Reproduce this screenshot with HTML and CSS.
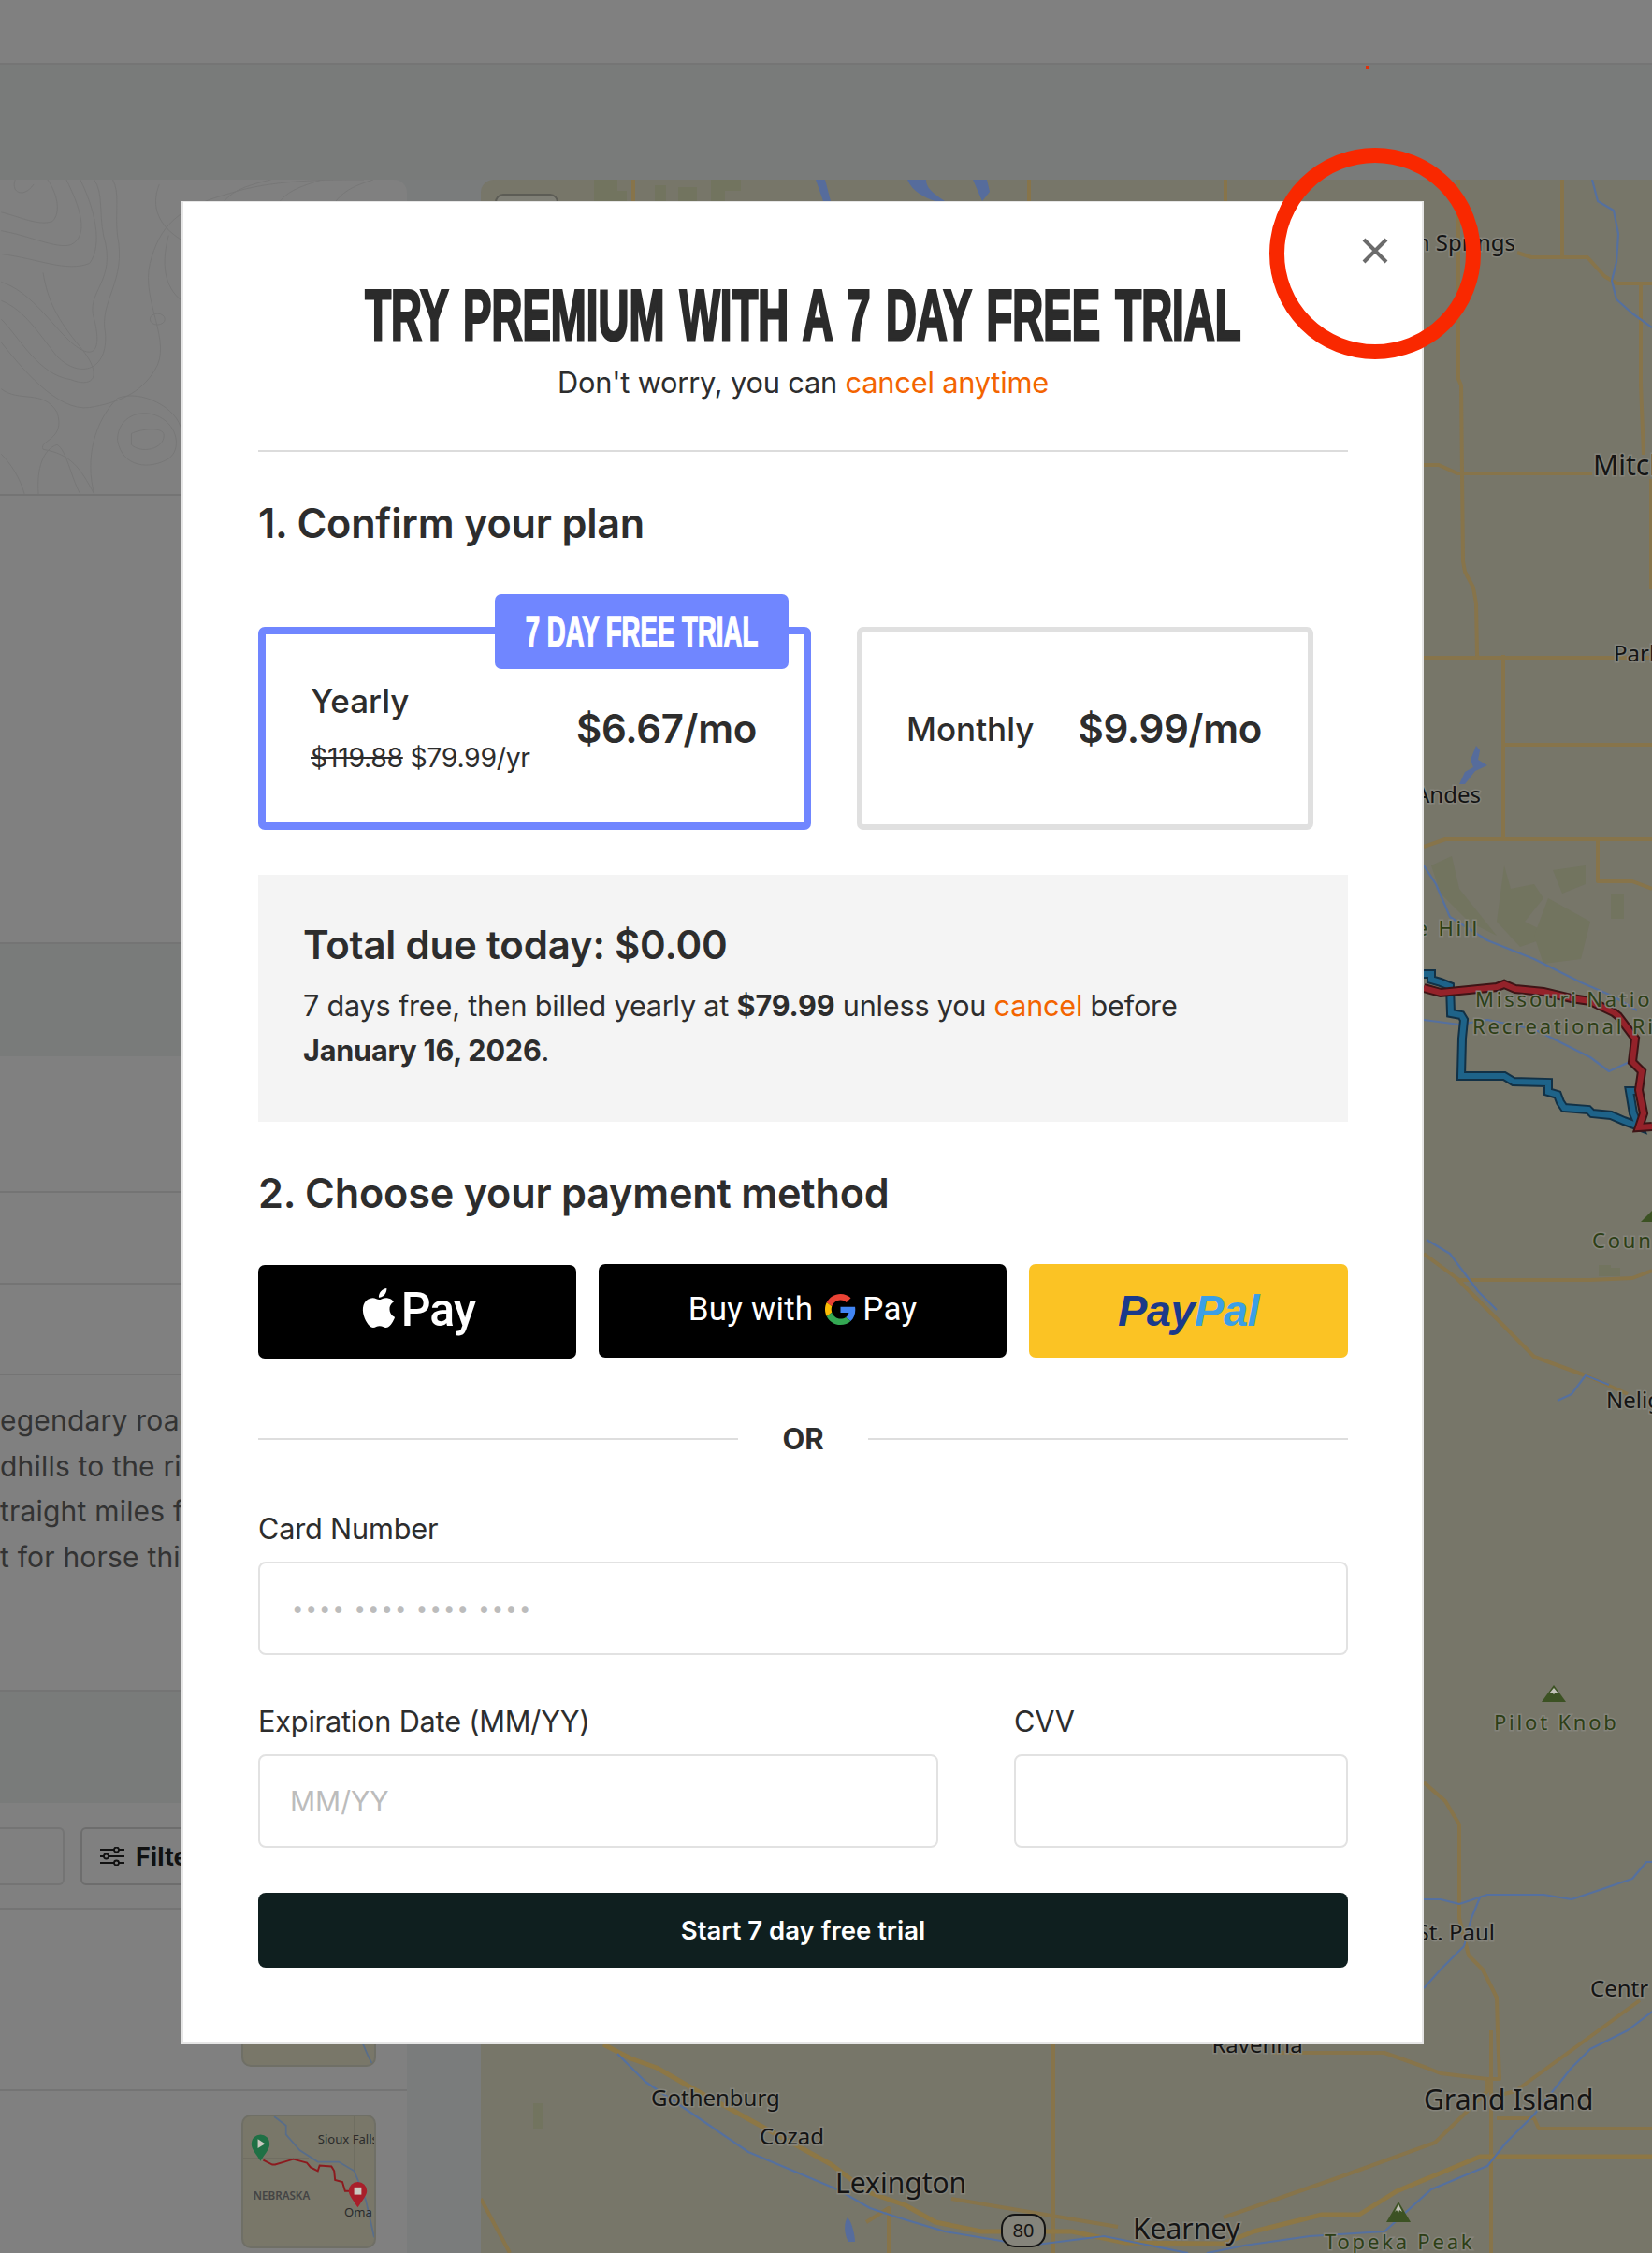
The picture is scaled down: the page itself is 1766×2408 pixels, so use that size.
FILE: index.html
```html
<!DOCTYPE html>
<html lang="en">
<head>
<meta charset="utf-8">
<title>Try Premium</title>
<link rel="stylesheet" href="styles.css">
</head>
<body>
<div class="page">
  <header class="topbar"><span class="topdot"></span></header>
  <div class="band"></div>
  <div class="main">
    <aside class="sidebar">
      <div class="topo">
        <svg class="fill" viewBox="0 0 435 338">
          <g class="contour">
            <path d="M0 55C30 60 60 75 75 70C95 60 85 30 70 0"/>
            <path d="M0 80C40 85 70 100 95 90C110 70 100 30 85 0"/>
            <path d="M15 0C10 15 25 20 35 5"/>
            <path d="M0 35C20 40 40 50 55 45C65 35 60 15 50 0"/>
            <path d="M0 110C30 120 50 150 70 170C95 195 110 190 100 150C90 120 125 110 110 60C105 35 110 15 100 0"/>
            <path d="M0 130C25 140 40 165 60 190C85 215 115 205 112 165C105 130 135 110 125 60C122 35 128 15 120 0"/>
            <path d="M0 150C20 170 40 210 75 215C100 225 110 210 85 180C60 150 50 130 45 100"/>
            <path d="M0 175C20 200 60 250 95 245C125 240 150 230 165 205C185 175 150 130 160 90C170 50 190 30 245 15C290 0 350 0 390 0"/>
            <path d="M0 225C20 240 45 225 60 250C70 280 40 280 45 290C75 295 85 310 100 338"/>
            <path d="M100 338C90 300 100 260 125 235C150 225 190 245 194 270"/>
            <path d="M140 273C150 268 175 265 175 275C175 290 150 295 140 285Z"/>
            <path d="M125 280C125 255 150 245 170 255C190 265 194 290 180 300C160 312 130 310 125 280Z"/>
            <path d="M160 150a8 6 0 1 0 16 0a8 6 0 1 0-16 0"/>
            <path d="M40 338C38 310 45 290 60 285C70 290 75 320 85 338"/>
            <path d="M194 65C170 50 160 30 170 5"/>
            <path d="M194 130C175 115 172 90 180 60"/>
            <path d="M0 295C10 305 20 320 25 338"/>
            <path d="M240 23C250 10 270 5 290 0M300 23C310 10 330 5 345 0M360 23C370 10 385 5 400 0"/>
          </g>
        </svg>
      </div>
      <div class="sec-a"></div>
      <div class="sec-band"></div>
      <div class="sec-b"></div>
      <div class="sec-c"></div>
      <div class="sec-d"></div>
      <div class="sec-text">
        <p class="blurb">egendary road trip across</p>
        <p class="blurb">dhills to the rivers beyond</p>
        <p class="blurb">traight miles from the west</p>
        <p class="blurb">t for horse thieves and more</p>
      </div>
      <div class="sec-band2"></div>
      <div class="filter-row">
        <div class="search-box"></div>
        <div class="filter-btn">
          <svg class="slider-icon" viewBox="0 0 26 20">
            <g class="slider-lines">
              <path d="M0 3h15M20 3h6M0 10h4M9 10h17M0 17h15M20 17h6"/>
              <circle cx="17.5" cy="3" r="2.5"/><circle cx="6.500" cy="10" r="2.5"/><circle cx="17.500" cy="17" r="2.500"/>
            </g>
          </svg>
          <span>Filters</span>
        </div>
      </div>
      <div class="sec-thumb1">
        <div class="thumb thumb-a">
          <svg class="fill" viewBox="0 0 144 89"><path class="thumb-river" d="M132 64C136 72 138 80 144 89"/></svg>
        </div>
      </div>
      <div class="sec-thumb2">
        <div class="thumb thumb-b">
          <svg class="fill" viewBox="0 0 144 143">
            <path class="thumb-road" d="M0 46H72M122 0V60"/>
            <path class="thumb-river" d="M34 0L47 10L47 20L62 37L82 50L105 50L122 60L129 77L135 93L144 133"/>
            <path class="thumb-route" d="M22 48L32 53L35 53L45 50L55 47L70 51L74 56L82 60L84 54L97 55L100 60L101 70L109 72L112 82L122 82"/>
            <path class="pin-green" d="M19 49C14 41 9 36 9 30A10 10 0 0 1 29 30C29 36 24 41 19 49Z"/>
            <path class="pin-mark" d="M16 25L24 30L16 35Z"/>
            <path class="pin-red" d="M126 100C120 91 116 86 116 82A10 10 0 0 1 136 82C136 86 132 91 126 100Z"/>
            <rect class="pin-mark" x="122" y="78" width="8" height="8"/>
            <text class="thumb-city" x="82" y="30">Sioux Falls</text>
            <text class="thumb-state" x="11" y="92">NEBRASKA</text>
            <text class="thumb-city" x="111" y="110">Oma</text>
          </svg>
        </div>
      </div>
    </aside>
    <div class="strip"></div>
    <div class="map">
      <svg class="map-svg" viewBox="514 192 1252 2216">
        <g class="park">
          <path d="M635 192H660V204H670V215H635ZM700 198H712V215H700ZM725 200H745V215H725ZM760 192H792V204H775V215H760Z"/>
          <path d="M1530 925L1552 915L1560 950L1580 975L1600 1000L1570 985L1540 955Z"/>
          <path d="M1608 925L1615 950L1640 945L1650 960L1630 985L1660 1000L1625 1012L1600 985Z"/>
          <path d="M1660 930L1695 925L1695 945L1670 955ZM1655 960L1700 985L1690 1025L1650 1030L1640 1000Z"/>
          <path d="M1709 1352H1722V1355H1732V1364H1709Z"/>
          <path d="M570 2248H580V2276H570Z"/>
          <path d="M1722 955H1736V982H1722Z"/>
        </g>
        <g class="water">
          <path d="M872 192L880 215H888L882 192Z"/>
          <path d="M970 192C975 205 990 212 1000 215H1010C995 205 990 200 990 192ZM1040 192L1050 215L1058 205L1055 192Z"/>
          <path d="M1560 838L1566 825L1575 820L1572 812L1578 797L1582 802L1580 812L1590 818L1577 824L1566 838Z"/>
          <path d="M906 2370C911 2375 914 2390 914 2396L907 2396C902 2388 902 2375 906 2370Z"/>
        </g>
        <g class="road">
          <path d="M1100 192V215M1310 192V215M677 192V215"/>
          <path d="M1559 192V405L1562 412L1563 506L1564 600L1566 611L1575 628L1578 645L1579 700L1580 704"/>
          <path d="M1670 192V275M1622 270L1637 275H1697L1715 295L1728 303H1766M1754 303V410L1757 486M1522 497H1538L1558 506H1702M1765 512V630"/>
          <path d="M1522 703H1766M1607 700V898M1607 796H1766M1522 905L1545 897H1766M1708 897V942H1745L1766 950"/>
          <path d="M1522 1340L1560 1368H1700L1745 1366L1766 1358M1557 1366L1640 1450L1700 1472L1740 1490"/>
          <path d="M1522 1905L1545 1925L1560 1950V2050L1570 2090L1585 2105L1600 2135L1601 2170L1603 2222H1590V2235L1565 2260L1534 2290L1429 2328L1308 2370M1195 2380L1017 2350"/>
          <path d="M1360 2194H1480L1525 2210L1540 2216L1590 2222M1600 2240L1620 2235L1753 2138"/>
          <path d="M1600 2264H1640L1645 2275H1766"/>
          <path d="M1126 2185V2408M1594 2170V2408"/>
          <path d="M514 2350L545 2408M926 2375L950 2360L950 2408"/>
          <path class="road-main" d="M645 2185L674 2200L702 2210L742 2233L815 2273L888 2313L928 2343L968 2357L1000 2375L1049 2385H1146L1203 2397L1308 2398L1340 2385L1413 2367H1453L1493 2342L1582 2305H1610H1766"/>
        </g>
        <g class="river">
          <path d="M1702 192L1708 215L1725 225L1730 250L1728 280L1723 300L1728 320L1745 335L1766 350"/>
          <path d="M1522 925L1535 945L1550 980L1590 1005L1640 1025L1690 1050L1725 1065L1750 1080"/>
          <path d="M1522 1090L1560 1095L1590 1090L1640 1100L1700 1130L1720 1145L1742 1135"/>
          <path d="M1525 1325L1550 1340L1580 1380L1600 1400M1665 1497L1680 1490L1695 1470L1720 1480"/>
          <path d="M1522 2030L1540 2030L1560 2035L1590 2025L1650 2025L1680 2030L1710 2020L1745 2008L1760 1990H1766M1582 2028L1573 2050L1565 2080L1540 2105L1522 2125"/>
          <path d="M1766 2150L1740 2170L1700 2190L1680 2210L1640 2260L1610 2290L1590 2315L1530 2340L1480 2385L1400 2390L1330 2400L1290 2408"/>
          <path d="M660 2195L690 2225L800 2300L895 2340L930 2360L960 2370L1010 2385L1100 2400L1180 2390L1270 2408"/>
        </g>
        <g class="route-blue-edge">
          <path d="M1522 1041H1530V1047L1540 1050L1550 1054L1551 1083L1562 1085L1565 1090L1563 1110L1562 1150H1608L1618 1156L1655 1157V1167L1665 1170L1668 1178L1672 1184L1698 1186L1702 1190L1722 1192L1736 1198L1752 1204L1746 1190L1742 1166H1748"/>
        </g>
        <g class="route-blue">
          <path d="M1522 1041H1530V1047L1540 1050L1550 1054L1551 1083L1562 1085L1565 1090L1563 1110L1562 1150H1608L1618 1156L1655 1157V1167L1665 1170L1668 1178L1672 1184L1698 1186L1702 1190L1722 1192L1736 1198L1752 1204L1746 1190L1742 1166H1748"/>
        </g>
        <g class="route-red-edge">
          <path d="M1522 1056L1540 1061L1600 1055L1608 1052L1620 1057L1650 1060L1680 1067L1700 1070L1725 1082L1730 1086L1748 1110L1745 1135L1755 1145L1752 1165L1757 1190L1752 1205L1766 1204"/>
        </g>
        <g class="route-red">
          <path d="M1522 1056L1540 1061L1600 1055L1608 1052L1620 1057L1650 1060L1680 1067L1700 1070L1725 1082L1730 1086L1748 1110L1745 1135L1755 1145L1752 1165L1757 1190L1752 1205L1766 1204"/>
        </g>
        <path class="peak" d="M1767 1293L1780 1306H1754Z"/>
        <path class="peak" d="M1661 1801L1674 1819H1648Z"/>
        <path class="snow" d="M1661 1804L1666 1810L1663 1809L1661 1811L1659 1809L1656 1810Z"/>
        <path class="peak" d="M1495 2353L1508 2375H1482Z"/>
        <path class="snow" d="M1495 2356L1499 2364L1496 2362L1495 2365L1493 2362L1491 2364Z"/>
        <text class="lbl lbl-m" x="1620" y="268" text-anchor="end">n Springs</text>
        <text class="lbl lbl-xl" x="1703" y="508">Mitch</text>
        <text class="lbl lbl-m" x="1725" y="707">Park</text>
        <text class="lbl lbl-m" x="1583" y="858" text-anchor="end">Andes</text>
        <text class="lbl lbl-g" x="1582" y="1000" text-anchor="end">e Hill</text>
        <text class="lbl lbl-g" x="1577" y="1076">Missouri Nation</text>
        <text class="lbl lbl-g" x="1574" y="1105">Recreational Ri</text>
        <text class="lbl lbl-g" x="1702" y="1334">Coun</text>
        <text class="lbl lbl-m" x="1717" y="1505">Nelig</text>
        <text class="lbl lbl-g" x="1597" y="1849">Pilot Knob</text>
        <text class="lbl lbl-m" x="1598" y="2074" text-anchor="end">St. Paul</text>
        <text class="lbl lbl-m" x="1700" y="2134">Centr</text>
        <text class="lbl lbl-m" x="1344" y="2194" text-anchor="middle">Ravenna</text>
        <text class="lbl lbl-xl" x="1522" y="2255">Grand Island</text>
        <text class="lbl lbl-m" x="696" y="2251">Gothenburg</text>
        <text class="lbl lbl-m" x="812" y="2292">Cozad</text>
        <text class="lbl lbl-l" x="893" y="2344">Lexington</text>
        <text class="lbl lbl-l" x="1211" y="2393">Kearney</text>
        <text class="lbl lbl-g" x="1416" y="2404">Topeka Peak</text>
        <rect class="shield" x="1071" y="2367" width="46" height="34" rx="14"/>
        <text class="shield-num" x="1094" y="2391" text-anchor="middle">80</text>
        <rect class="map-ctrl" x="530" y="208" width="66" height="30" rx="8"/>
      </svg>
    </div>
  </div>

  <section class="modal">
    <button class="close" aria-label="Close">
      <svg class="close-icon" viewBox="0 0 28 28"><path d="M2 2L26 26M26 2L2 26"/></svg>
    </button>
    <div class="intro">
      <h1 class="title"><span class="title-in">TRY PREMIUM WITH A 7 DAY FREE TRIAL</span></h1>
      <p class="sub">Don't worry, you can <span class="orange">cancel anytime</span></p>
    </div>
    <hr class="rule">
    <h2 class="step step-1">1. Confirm your plan</h2>
    <div class="plans">
      <div class="plan plan-on">
        <div class="badge"><span class="badge-in">7 DAY FREE TRIAL</span></div>
        <div class="plan-left">
          <div class="plan-name">Yearly</div>
          <div class="plan-was"><s>$119.88</s> $79.99/yr</div>
        </div>
        <div class="plan-price">$6.67/mo</div>
      </div>
      <div class="plan plan-off">
        <div class="plan-name">Monthly</div>
        <div class="plan-price">$9.99/mo</div>
      </div>
    </div>
    <div class="total">
      <h3 class="total-h">Total due today: $0.00</h3>
      <p class="total-p">7 days free, then billed yearly at <b>$79.99</b> unless you <span class="orange">cancel</span> before<br><b>January 16, 2026</b>.</p>
    </div>
    <h2 class="step step-2">2. Choose your payment method</h2>
    <div class="pays">
      <div class="pay pay-apple">
        <svg class="apple" viewBox="0 0 24 24"><path d="M12.152 6.896c-.948 0-2.415-1.078-3.96-1.04-2.04.027-3.91 1.183-4.961 3.014-2.117 3.675-.546 9.103 1.519 12.09 1.013 1.454 2.208 3.09 3.792 3.039 1.52-.065 2.09-.987 3.935-.987 1.831 0 2.35.987 3.96.948 1.637-.026 2.676-1.48 3.676-2.948 1.156-1.688 1.636-3.325 1.662-3.415-.039-.013-3.182-1.221-3.22-4.857-.026-3.04 2.48-4.494 2.597-4.559-1.429-2.09-3.623-2.324-4.39-2.376-2-.156-3.675 1.09-4.61 1.09zM15.53 3.83c.843-1.012 1.4-2.427 1.245-3.83-1.207.052-2.662.805-3.532 1.818-.78.896-1.454 2.338-1.273 3.714 1.338.104 2.715-.688 3.559-1.701"/></svg>
        <span class="apple-pay">Pay</span>
      </div>
      <div class="pay pay-google">
        <span class="buy">Buy with</span>
        <svg class="g-logo" viewBox="0 0 48 48">
          <path fill="#EA4335" d="M24 9.500c3.540 0 6.710 1.220 9.210 3.600l6.850-6.850C35.900 2.380 30.470 0 24 0 14.620 0 6.510 5.380 2.560 13.220l7.980 6.190C12.430 13.720 17.740 9.500 24 9.500z"/>
          <path fill="#4285F4" d="M46.980 24.550c0-1.570-.15-3.090-.38-4.550H24v9.020h12.940c-.58 2.960-2.260 5.480-4.780 7.180l7.730 6c4.510-4.180 7.090-10.360 7.090-17.650z"/>
          <path fill="#FBBC05" d="M10.530 28.590c-.48-1.450-.76-2.990-.76-4.590s.27-3.140.76-4.590l-7.980-6.190C.92 16.460 0 20.120 0 24c0 3.880.92 7.540 2.560 10.780l7.970-6.190z"/>
          <path fill="#34A853" d="M24 48c6.480 0 11.930-2.130 15.890-5.810l-7.730-6c-2.150 1.450-4.920 2.300-8.160 2.300-6.260 0-11.570-4.220-13.470-9.910l-7.980 6.190C6.510 42.620 14.620 48 24 48z"/>
        </svg>
        <span class="buy buy-pay">Pay</span>
      </div>
      <div class="pay pay-paypal"><span class="pp-a">Pay</span><span class="pp-b">Pal</span></div>
    </div>
    <div class="or"><span class="or-line"></span><span class="or-text">OR</span><span class="or-line"></span></div>
    <label class="field-label label-card">Card Number</label>
    <input class="input input-dots" placeholder="•••• •••• •••• ••••">
    <div class="field-grid">
      <div>
        <label class="field-label">Expiration Date (MM/YY)</label>
        <input class="input" placeholder="MM/YY">
      </div>
      <div>
        <label class="field-label">CVV</label>
        <input class="input">
      </div>
    </div>
    <button class="submit">Start 7 day free trial</button>
  </section>

  <svg class="annot" viewBox="0 0 226 226"><ellipse cx="113" cy="113" rx="105" ry="105"/></svg>
</div>
</body>
</html>
```

FILE: styles.css
```css
* { box-sizing: border-box; }
html, body { margin: 0; padding: 0; }
body { font-family: Inter, "Liberation Sans", sans-serif; color: #2d2d2d; background: #808080; }
.page { position: relative; width: 1766px; height: 2408px; overflow: hidden; display: flex; flex-direction: column; background: #808080; }

/* dimmed page behind the dialog */
.topbar { position: relative; height: 69px; border-bottom: 2px solid #757575; flex: none; }
.topdot { position: absolute; left: 1460px; top: 71px; width: 3px; height: 3px; background: #e0300a; }
.band { height: 123px; background: #797b7a; flex: none; }
.main { flex: 1; display: flex; background: #7a7c7c; min-height: 0; }
.sidebar { width: 435px; flex: none; background: #808080; border-top-right-radius: 14px; overflow: hidden; }
.strip { width: 79px; flex: none; }
.map { flex: 1; background: #777669; border-top-left-radius: 14px; overflow: hidden; }
.map-svg { display: block; width: 1252px; height: 2216px; }
.fill { display: block; width: 100%; height: 100%; }

.topo { height: 338px; border-bottom: 2px solid #747474; }
.contour path { fill: none; stroke: #777777; stroke-width: 1; }
.sec-a { height: 479px; border-bottom: 2px solid #747474; }
.sec-band { height: 120px; background: #797b7a; }
.sec-b { height: 146px; border-bottom: 2px solid #747474; }
.sec-c { height: 98px; border-bottom: 2px solid #747474; }
.sec-d { height: 97px; border-bottom: 2px solid #747474; }
.sec-text { height: 338px; padding-top: 24px; border-bottom: 2px solid #747474; }
.blurb { margin: 0; white-space: nowrap; font-size: 30px; line-height: 48.500px; letter-spacing: .2px; color: #333; }
.sec-band2 { height: 119px; background: #797b7a; }
.filter-row { height: 114px; display: flex; gap: 17px; padding-top: 26px; border-bottom: 2px solid #747474; }
.search-box { width: 69px; height: 62px; border: 2px solid #747474; border-left: 0; border-radius: 0 6px 6px 0; }
.filter-btn { flex: none; width: 160px; height: 62px; border: 2px solid #6d6d6d; border-radius: 6px; display: flex; align-items: center; gap: 12px; padding-left: 19px; font-size: 27px; font-weight: 700; color: #111; }
.slider-icon { width: 26px; height: 20px; flex: none; }
.slider-lines path, .slider-lines circle { fill: none; stroke: #111; stroke-width: 1.8; }
.sec-thumb1 { height: 194px; padding-left: 258px; border-bottom: 2px solid #747474; position: relative; }
.sec-thumb2 { height: 173px; padding: 25px 0 0 258px; }
.thumb { width: 144px; background: #797769; border: 2px solid #6f6f66; border-radius: 10px; overflow: hidden; }
.thumb-a { height: 89px; margin-top: 79px; position: absolute; }
.thumb-b { height: 143px; }
.thumb-river { fill: none; stroke: #586d8a; stroke-width: 1.8; }
.thumb-road { fill: none; stroke: #6d6c60; stroke-width: 1; }
.thumb-route { fill: none; stroke: #8c1a1e; stroke-width: 2; }
.pin-green { fill: #1f7045; }
.pin-red { fill: #a81f2a; }
.pin-mark { fill: #c9c9c0; }
.thumb-city { font: 13.500px "Noto Sans", sans-serif; fill: #2b2b2b; }
.thumb-state { font: 600 12px "Noto Sans", sans-serif; fill: #444; }

.park path { fill: #72745f; }
.water path { fill: #566c9c; }
.road path { fill: none; stroke: #87744a; stroke-width: 4; stroke-linejoin: round; }
.road .road-main { stroke: #8d7745; stroke-width: 5; }
.river path { fill: none; stroke: #55709f; stroke-width: 2.200; stroke-linejoin: round; }
.route-blue-edge path { fill: none; stroke: #123146; stroke-width: 10; }
.route-blue path { fill: none; stroke: #1e6389; stroke-width: 6; }
.route-red-edge path { fill: none; stroke: #3e1416; stroke-width: 10; }
.route-red path { fill: none; stroke: #94222a; stroke-width: 6; }
.peak { fill: #3c5223; }
.snow { fill: #c4c4bb; }
.lbl { font-family: "Noto Sans", sans-serif; fill: #141414; paint-order: stroke; stroke: #85847b; stroke-width: 3px; }
.lbl-m { font-size: 24px; }
.lbl-l { font-size: 30px; }
.lbl-xl { font-size: 30px; }
.lbl-g { font-size: 22px; letter-spacing: 2.800px; fill: #2d3f16; }
.shield { fill: #85847b; stroke: #141414; stroke-width: 2; }
.shield-num { font: 20px "Noto Sans", sans-serif; fill: #141414; }
.map-ctrl { fill: #7f7f76; stroke: #5c5c55; stroke-width: 2; }

/* dialog */
.modal { position: absolute; left: 194px; top: 215px; width: 1328px; height: 1970px; background: #fff; border: 2px solid #e6e6e6; border-top-width: 1px; padding: 80px 79px 0 80px; }
.close { position: absolute; left: 1260px; top: 38px; width: 28px; height: 28px; padding: 0; border: 0; background: none; }
.close-icon { display: block; width: 28px; height: 28px; }
.close-icon path { fill: none; stroke: #6b6b6b; stroke-width: 4; }
.intro { text-align: center; }
.title { margin: 0; height: 80px; font: 700 76px/82px "Liberation Sans", sans-serif; color: #2b2b2b; white-space: nowrap; display: flex; justify-content: center; }
.title-in { display: block; flex: none; transform: scaleX(.6); word-spacing: 6px; -webkit-text-stroke: 3px #2b2b2b; }
.sub { margin: 11px 0 0; font-size: 30.800px; line-height: 44px; letter-spacing: -.2px; color: #2d2d2d; }
.orange { color: #f36400; }
.rule { margin: 50px 0 0; height: 2px; border: 0; background: #dcdcdc; }
.step { margin: 48px 0 0; font-size: 43.200px; line-height: 56px; font-weight: 600; letter-spacing: -.2px; color: #2d2d2d; }
.plans { display: flex; gap: 49px; margin-top: 83px; height: 217px; }
.plan { position: relative; display: flex; align-items: center; justify-content: space-between; border-radius: 7px; height: 217px; }
.plan-on { width: 591px; border: 8px solid #7086ff; padding: 0 50px 0 48px; }
.plan-off { width: 488px; border: 6px solid #e0e0e0; padding: 0 49px 0 47px; }
.badge { position: absolute; right: 16px; top: -43px; width: 314px; height: 80px; border-radius: 7px; background: #7086ff; color: #fff; display: flex; align-items: center; justify-content: center; font: 700 46px/78px "Liberation Sans", sans-serif; white-space: nowrap; }
.badge-in { display: block; flex: none; transform: scaleX(.6); -webkit-text-stroke: 1.500px #fff; }
.plan-name { font-size: 35px; line-height: 44px; font-weight: 500; }
.plan-left .plan-name { margin-top: 2px; }
.plan-was { margin-top: 17px; font-size: 28.400px; line-height: 44px; white-space: nowrap; letter-spacing: -.3px; }
.plan-price { font-size: 42px; line-height: 56px; font-weight: 600; letter-spacing: -.3px; white-space: nowrap; }
.total { margin-top: 48px; height: 264px; background: #f4f4f4; padding: 47px 48px 0; }
.total-h { margin: 0; font-size: 42px; line-height: 56px; font-weight: 600; letter-spacing: -.2px; }
.total-p { margin: 13px 0 0; font-size: 30.600px; line-height: 48px; letter-spacing: -.2px; }
.total-p b { font-weight: 700; }
.step-2 { margin-top: 48px; }
.pays { display: grid; grid-template-columns: 340px 1fr 341px; gap: 24px; margin-top: 48px; }
.pay { height: 100px; border-radius: 7px; display: flex; align-items: center; justify-content: center; }
.pay-apple { background: #000; color: #fff; margin-top: 1px; gap: 3px; }
.apple { width: 42px; height: 50px; fill: #fff; margin-top: -8px; }
.apple-pay { font: 500 50px/56px Roboto, sans-serif; letter-spacing: -1px; margin-top: -5px; }
.pay-google { background: #000; color: #fff; gap: 13px; }
.buy { font: 400 35px/44px Roboto, sans-serif; letter-spacing: .2px; margin-top: -3px; }
.buy-pay { margin-left: -6px; }
.g-logo { width: 33px; height: 33px; margin-top: -3px; }
.pay-paypal { background: #fbc324; font: italic 700 47px/50px "Liberation Sans", sans-serif; letter-spacing: -.5px; }
.pp-a { color: #1b3a8a; }
.pp-b { color: #3b9fe6; }
.or { display: flex; align-items: center; gap: 47px; margin-top: 66px; height: 40px; }
.or-line { flex: 1; height: 2px; background: #dedede; }
.or-text { font-size: 31px; font-weight: 700; line-height: 40px; color: #2d2d2d; }
.field-label { display: block; font-size: 30.700px; line-height: 44px; color: #2d2d2d; letter-spacing: -.2px; }
.label-card { margin-top: 54px; }
.input { display: block; width: 100%; height: 100px; margin-top: 13px; padding: 0 32px; border: 2px solid #e2e2e2; border-radius: 8px; background: #fff; font: 400 30px Inter, sans-serif; color: #2d2d2d; outline: 0; }
.input::placeholder { color: #bcbcbc; opacity: 1; }
.input-dots { font-size: 22px; padding-left: 34px; letter-spacing: 2.150px; }
.field-grid { display: grid; grid-template-columns: 727px 1fr; gap: 81px; margin-top: 49px; }
.submit { display: block; width: 100%; height: 80px; margin-top: 48px; border: 0; border-radius: 8px; background: #0f1f1f; color: #fff; font: 600 27.500px Inter, sans-serif; }

.annot { position: absolute; left: 1357px; top: 158px; width: 226px; height: 226px; overflow: visible; }
.annot ellipse { fill: none; stroke: #f92800; stroke-width: 16; }
```
